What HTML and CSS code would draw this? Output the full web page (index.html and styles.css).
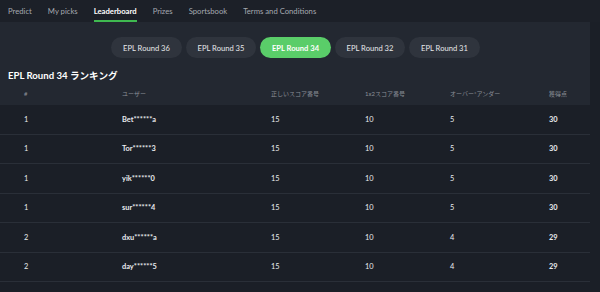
FILE: index.html
```html
<!DOCTYPE html>
<html lang="ja">
<head>
    <meta charset="UTF-8">
    <meta name="viewport" content="width=device-width, initial-scale=1.0">
    <title>Leaderboard</title>
    <link rel="stylesheet" href="styles.css">
</head>
<body>
    <nav class="tabs">
        <a href="#">Predict</a>
        <a href="#">My picks</a>
        <a href="#" class="active">Leaderboard</a>
        <a href="#">Prizes</a>
        <a href="#">Sportsbook</a>
        <a href="#">Terms and Conditions</a>
    </nav>
    <div class="page">
        <div class="panel">
            <div class="rounds">
                <button class="round">EPL Round 36</button>
                <button class="round">EPL Round 35</button>
                <button class="round selected">EPL Round 34</button>
                <button class="round">EPL Round 32</button>
                <button class="round">EPL Round 31</button>
            </div>
            <h2>EPL Round 34 ランキング</h2>
            <div class="row head">
                <span>#</span>
                <span>ユーザー</span>
                <span>正しいスコア番号</span>
                <span>1x2スコア番号</span>
                <span>オーバー*アンダー</span>
                <span>獲得点</span>
            </div>
        </div>
        <div class="rows">
            <div class="row"><span>1</span><span class="b">Bet******a</span><span>15</span><span>10</span><span>5</span><span class="b">30</span></div>
            <div class="row"><span>1</span><span class="b">Tor******3</span><span>15</span><span>10</span><span>5</span><span class="b">30</span></div>
            <div class="row"><span>1</span><span class="b">yik******0</span><span>15</span><span>10</span><span>5</span><span class="b">30</span></div>
            <div class="row"><span>1</span><span class="b">sur******4</span><span>15</span><span>10</span><span>5</span><span class="b">30</span></div>
            <div class="row"><span>2</span><span class="b">dxu******a</span><span>15</span><span>10</span><span>4</span><span class="b">29</span></div>
            <div class="row"><span>2</span><span class="b">day******5</span><span>15</span><span>10</span><span>4</span><span class="b">29</span></div>
        </div>
    </div>
</body>
</html>
```
FILE: styles.css
```css
body {
    margin: 0;
    background-color: #1b1f27;
    font-family: Lato, "Noto Sans CJK JP", sans-serif;
    color: #e9ebee;
    overflow: hidden;
}

.tabs {
    display: flex;
    gap: 16px;
    height: 22px;
    padding: 0 8px;
    background-color: #1c2028;
    box-sizing: border-box;
}

.tabs a {
    display: flex;
    align-items: center;
    font-size: 7.7px;
    color: #a4a9b0;
    text-decoration: none;
    border-bottom: 2px solid transparent;
    padding-top: 2px;
}

.tabs a.active {
    color: #ffffff;
    font-weight: bold;
    border-bottom-color: #3fb950;
}

.page {
    width: 590px;
}

.panel {
    background-color: #232831;
    padding-top: 15px;
}

.rounds {
    display: flex;
    justify-content: center;
    gap: 4px;
    padding-left: 1px;
}

.round {
    width: 70.5px;
    height: 21px;
    border: none;
    border-radius: 11px;
    background-color: #2f343d;
    color: #e6e8ea;
    font-family: inherit;
    font-size: 7.6px;
    padding: 0;
    cursor: pointer;
}

.round.selected {
    background-color: #5acd69;
    color: #ffffff;
    font-weight: bold;
}

h2 {
    margin: 12px 0 0 8px;
    font-size: 9.6px;
    line-height: 12px;
    font-weight: bold;
    color: #ffffff;
}

.row {
    display: grid;
    grid-template-columns: 98px 149px 94px 85px 99px auto;
    align-items: center;
    height: 28.5px;
    padding-left: 24px;
    font-size: 7.4px;
    border-bottom: 1px solid #2a2f38;
}

.row.head {
    height: 23px;
    border-bottom: none;
    font-size: 6px;
    color: #8b9098;
}

.b {
    font-weight: bold;
}
```
